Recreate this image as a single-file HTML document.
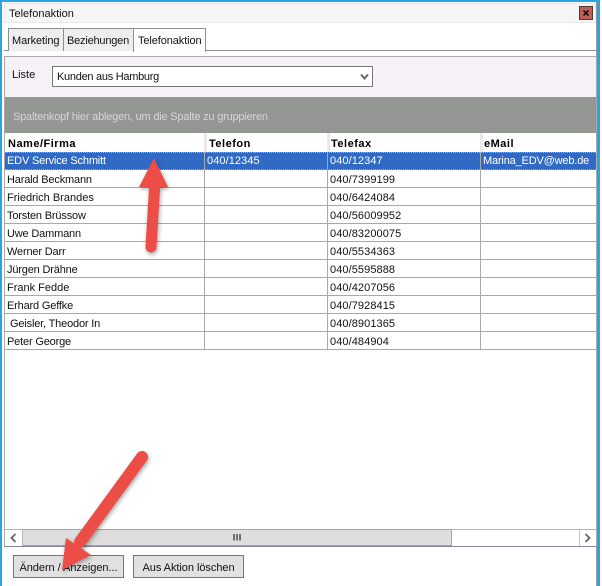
<!DOCTYPE html>
<html><head><meta charset="utf-8"><style>
html,body{margin:0;padding:0;background:#fff}
#r{position:relative;width:602px;height:586px;overflow:hidden;background:#fff;font:11px "Liberation Sans",sans-serif;color:#111}
#r div{position:absolute;box-sizing:border-box;white-space:pre}
.tab{border:1px solid #8f8f8f;border-bottom:0;background:#f0edf0;top:28px;height:23px;line-height:24px;padding-left:3px;letter-spacing:-.1px}
.hl{left:5px;width:591px;height:1px;background:#a8a8a8}
.vl{width:1px;top:152px;height:198px;background:#a8a8a8}
.t{line-height:20px;height:18px}
.n{letter-spacing:-.17px}
.d{letter-spacing:.08px}
.h{font-weight:bold;top:134px;height:17px;line-height:20px;letter-spacing:.5px;color:#000}
.b{top:555px;height:23px;width:111px;border:1px solid #777;background:#e1e1e1;text-align:center;line-height:24px;letter-spacing:-.05px}
</style></head><body><div id="r">
<div style="left:0;top:0;width:598px;height:2px;background:#2aa5e3"></div>
<div style="left:0;top:0;width:2px;height:586px;background:#2aa5e3"></div>
<div style="left:597px;top:0;width:3px;height:586px;background:#2aa5e3"></div>
<div style="left:596px;top:2px;width:1px;height:584px;background:#9a9aa0"></div>
<div style="left:4px;top:3px;width:592px;height:20px;background:#f6f6f6;border:1px solid #e3e8ec;line-height:20px;padding-left:4px">Telefonaktion</div>
<div style="left:579px;top:6px;width:14px;height:14px;background:#c25c58;border:1px solid #4a3a3a"></div>
<svg style="position:absolute;left:579px;top:6px" width="14" height="14"><path d="M4.500 4.500L9.500 9.500M9.500 4.500L4.500 9.500" stroke="#000" stroke-width="1.500"/></svg>
<div style="left:4px;top:50px;width:592px;height:1px;background:#8f8f8f"></div>
<div class="tab" style="left:8px;width:56px">Marketing</div>
<div class="tab" style="left:63px;width:71px;letter-spacing:-.2px">Beziehungen</div>
<div class="tab" style="left:133px;width:73px;height:24px;background:#fff;top:28px;padding-left:4px">Telefonaktion</div>
<div style="left:4px;top:56px;width:593px;height:491px;background:#f5f1f6;border:1px solid #aaa;border-bottom-color:#85859a"></div>
<div style="left:12px;top:68px;line-height:14px">Liste</div>
<div style="left:52px;top:66px;width:321px;height:21px;background:#fff;border:1px solid #777;line-height:21px;padding-left:4px;letter-spacing:-.28px">Kunden aus Hamburg</div>
<svg style="position:absolute;left:360px;top:73px" width="10" height="8"><path d="M1 1.500L4.500 5.500L8 1.500" fill="none" stroke="#666" stroke-width="2"/></svg>
<div style="left:5px;top:97px;width:591px;height:36px;background:#949693;color:#d6d6d6;line-height:40px;padding-left:8px;letter-spacing:-.2px">Spaltenkopf hier ablegen, um die Spalte zu gruppieren</div>
<div style="left:5px;top:133px;width:591px;height:396px;background:#fff"></div>
<div style="left:204px;top:133px;width:3px;height:19px;background:#ece8ec"></div>
<div style="left:327px;top:133px;width:3px;height:19px;background:#ece8ec"></div>
<div style="left:480px;top:133px;width:3px;height:19px;background:#ece8ec"></div>
<div class="h" style="left:8px">Name/Firma</div>
<div class="h" style="left:209px">Telefon</div>
<div class="h" style="left:331px">Telefax</div>
<div class="h" style="left:484px">eMail</div>
<div style="left:5px;top:152px;width:591px;height:18px;background:#316ac5;border-top:1px dotted #e8a33c;border-bottom:1px dotted #e8a33c"></div>
<div class="hl" style="top:187px"></div><div class="hl" style="top:205px"></div><div class="hl" style="top:223px"></div><div class="hl" style="top:241px"></div><div class="hl" style="top:259px"></div><div class="hl" style="top:277px"></div><div class="hl" style="top:295px"></div><div class="hl" style="top:313px"></div><div class="hl" style="top:331px"></div><div class="hl" style="top:349px"></div>
<div class="vl" style="left:204px"></div><div class="vl" style="left:327px"></div><div class="vl" style="left:480px"></div>
<div class="t n" style="left:7px;top:151px;color:#fff">EDV Service Schmitt</div>
<div class="t d" style="left:207px;top:151px;color:#fff">040/12345</div>
<div class="t d" style="left:330px;top:151px;color:#fff">040/12347</div>
<div class="t n" style="left:483px;top:151px;color:#fff">Marina_EDV@web.de</div>
<div class="t n" style="left:7px;top:170px">Harald Beckmann</div><div class="t d" style="left:330px;top:170px">040/7399199</div>
<div class="t" style="left:7px;top:188px">Friedrich Brandes</div><div class="t d" style="left:330px;top:188px">040/6424084</div>
<div class="t n" style="left:7px;top:206px">Torsten Brüssow</div><div class="t d" style="left:330px;top:206px">040/56009952</div>
<div class="t n" style="left:7px;top:224px">Uwe Dammann</div><div class="t d" style="left:330px;top:224px">040/83200075</div>
<div class="t n" style="left:7px;top:242px">Werner Darr</div><div class="t d" style="left:330px;top:242px">040/5534363</div>
<div class="t n" style="left:7px;top:260px">Jürgen Drähne</div><div class="t d" style="left:330px;top:260px">040/5595888</div>
<div class="t" style="left:7px;top:278px">Frank Fedde</div><div class="t d" style="left:330px;top:278px">040/4207056</div>
<div class="t n" style="left:7px;top:296px">Erhard Geffke</div><div class="t d" style="left:330px;top:296px">040/7928415</div>
<div class="t n" style="left:10px;top:314px">Geisler, Theodor In</div><div class="t d" style="left:330px;top:314px">040/8901365</div>
<div class="t n" style="left:7px;top:332px">Peter George</div><div class="t d" style="left:330px;top:332px">040/484904</div>
<div style="left:5px;top:529px;width:591px;height:17px;background:#fff;border-top:1px solid #b5b5b5"></div>
<div style="left:22px;top:529px;width:430px;height:17px;background:#dedede;border:1px solid #a5a5a5"></div>
<div style="left:22px;top:529px;width:1px;height:17px;background:#b5b5b5"></div>
<div style="left:579px;top:530px;width:1px;height:16px;background:#c5c5c5"></div>
<svg style="position:absolute;left:9px;top:532px" width="10" height="12"><path d="M6.500 2L2.500 6L6.500 10" fill="none" stroke="#666" stroke-width="1.800"/></svg>
<svg style="position:absolute;left:583px;top:532px" width="10" height="12"><path d="M2.500 2L6.500 6L2.500 10" fill="none" stroke="#666" stroke-width="1.800"/></svg>
<svg style="position:absolute;left:232px;top:533px" width="10" height="9"><path d="M2 1V7.500M5 1V7.500M8 1V7.500" stroke="#555" stroke-width="1.600"/></svg>
<div class="b" style="left:13px">Ändern / Anzeigen...</div>
<div class="b" style="left:133px">Aus Aktion löschen</div>
<svg style="position:absolute;left:0;top:0;filter:drop-shadow(1px 2px 2px rgba(0,0,0,.35))" width="602" height="586">
<path d="M151 247L155 180" stroke="#ec4d47" stroke-width="11" stroke-linecap="round" fill="none"/>
<path d="M154 158L168 187L139 187Z" fill="#ec4d47"/>
<path d="M142 457L80 542" stroke="#ec4d47" stroke-width="12" stroke-linecap="round" fill="none"/>
<path d="M62 570L66 538L91 555Z" fill="#ec4d47"/>
</svg>
</div></body></html>
